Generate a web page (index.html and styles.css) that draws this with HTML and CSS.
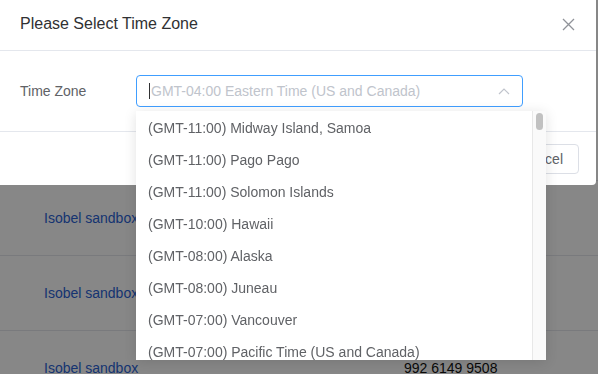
FILE: index.html
```html
<!DOCTYPE html>
<html lang="en">
<head>
  <meta charset="UTF-8" />
  <title>Meetings</title>
  <link rel="stylesheet" href="styles.css">
</head>
<body>
  <!-- page behind the dialog -->
  <div class="page">
    <div class="page-head"></div>
    <div class="meeting-row">
      <a href="#" class="meeting-link">Isobel sandbox</a>
      <span class="meeting-id">992 6149 9508</span>
    </div>
    <div class="meeting-row">
      <a href="#" class="meeting-link">Isobel sandbox</a>
      <span class="meeting-id">992 6149 9508</span>
    </div>
    <div class="meeting-row">
      <a href="#" class="meeting-link">Isobel sandbox</a>
      <span class="meeting-id">992 6149 9508</span>
    </div>
  </div>

  <div class="mask"></div>

  <!-- dialog -->
  <div class="dialog">
    <div class="dialog-header">
      <span class="dialog-title">Please Select Time Zone</span>
      <button class="dialog-close" aria-label="Close">
        <svg width="13" height="13" viewBox="0 0 13 13">
          <path d="M1 1 L12 12 M12 1 L1 12" stroke="#909399" stroke-width="1.3" fill="none"/>
        </svg>
      </button>
    </div>
    <div class="dialog-body">
      <label class="form-label">Time Zone</label>
      <div class="select">
        <span class="select-caret"></span>
        <span class="select-placeholder">GMT-04:00 Eastern Time (US and Canada)</span>
        <svg class="select-arrow" width="12" height="8" viewBox="0 0 12 8">
          <path d="M1 7 L6 2 L11 7" stroke="#c0c4cc" stroke-width="1.2" fill="none"/>
        </svg>
      </div>
    </div>
    <div class="dialog-footer">
      <button class="btn">Cancel</button>
    </div>
  </div>

  <!-- open dropdown -->
  <div class="dropdown">
    <ul class="dropdown-list">
      <li>(GMT-11:00) Midway Island, Samoa</li>
      <li>(GMT-11:00) Pago Pago</li>
      <li>(GMT-11:00) Solomon Islands</li>
      <li>(GMT-10:00) Hawaii</li>
      <li>(GMT-08:00) Alaska</li>
      <li>(GMT-08:00) Juneau</li>
      <li>(GMT-07:00) Vancouver</li>
      <li>(GMT-07:00) Pacific Time (US and Canada)</li>
    </ul>
    <div class="scroll-track"><div class="scroll-thumb"></div></div>
  </div>
</body>
</html>
```

FILE: styles.css
```css
body {
  margin: 0;
  font-family: "Liberation Sans", Arial, sans-serif;
  font-size: 14px;
  color: #303133;
  background: #fff;
  overflow: hidden;
}

/* Страница за диалогом */
.page-head {
  height: 181px;
  box-sizing: border-box;
  border-bottom: 1px solid #e4e7ed;
}

.meeting-row {
  display: grid;
  grid-template-columns: 360px 1fr;
  align-items: center;
  height: 75px;
  box-sizing: border-box;
  padding-left: 44px;
  border-bottom: 1px solid #e4e7ed;
}

.meeting-link {
  color: #2b63d6;
  text-decoration: none;
}

.meeting-id {
  color: #111;
}

.mask {
  position: fixed;
  inset: 0;
  background: rgba(0, 0, 0, 0.47);
}

/* Диалог */
.dialog {
  position: fixed;
  top: 0;
  left: -4px;
  width: 600px;
  background: #fff;
  border-radius: 0 0 4px 4px;
}

.dialog-header {
  display: flex;
  align-items: center;
  justify-content: space-between;
  padding: 12px 21px 14px 24px;
  height: 24px;
  border-bottom: 1px solid #e4e7ed;
}

.dialog-title {
  font-size: 16px;
  line-height: 24px;
  color: #303133;
}

.dialog-close {
  border: none;
  background: none;
  padding: 0;
  display: flex;
}

.dialog-body {
  display: flex;
  align-items: center;
  padding: 24px 20px 24px 24px;
}

.form-label {
  width: 116px;
  color: #606266;
}

.select {
  position: relative;
  display: flex;
  align-items: center;
  width: 387px;
  height: 32px;
  box-sizing: border-box;
  border: 1px solid #409eff;
  border-radius: 4px;
  padding: 0 12px;
}

.select-caret {
  width: 1px;
  height: 16px;
  background: #303133;
  margin-right: 1px;
}

.select-placeholder {
  flex: 1;
  color: #c0c4cc;
}

.dialog-footer {
  display: flex;
  justify-content: flex-end;
  padding: 12px 17px 11px;
  border-top: 1px solid #e4e7ed;
}

.btn {
  height: 30px;
  padding: 0 15px;
  border: 1px solid #dcdfe6;
  border-radius: 4px;
  background: #fff;
  font-family: inherit;
  font-size: 14px;
  color: #606266;
}

/* Выпадающий список */
.dropdown {
  position: fixed;
  top: 111px;
  left: 136px;
  width: 410px;
  height: 249px;
  display: flex;
  background: #fff;
  box-shadow: 0 2px 12px rgba(0, 0, 0, 0.12);
  overflow: hidden;
}

.dropdown-list {
  flex: 1;
  list-style: none;
  margin: 0;
  padding: 1px 0 0;
}

.dropdown-list li {
  height: 32px;
  line-height: 32px;
  padding-left: 12px;
  color: #606266;
  white-space: nowrap;
}

.scroll-track {
  width: 14px;
  background: #fafafa;
  border-left: 1px solid #e8e8e8;
  padding: 2px 0 0 3px;
  box-sizing: border-box;
}

.scroll-thumb {
  width: 7px;
  height: 17px;
  border-radius: 4px;
  background: #c1c1c1;
}
```
